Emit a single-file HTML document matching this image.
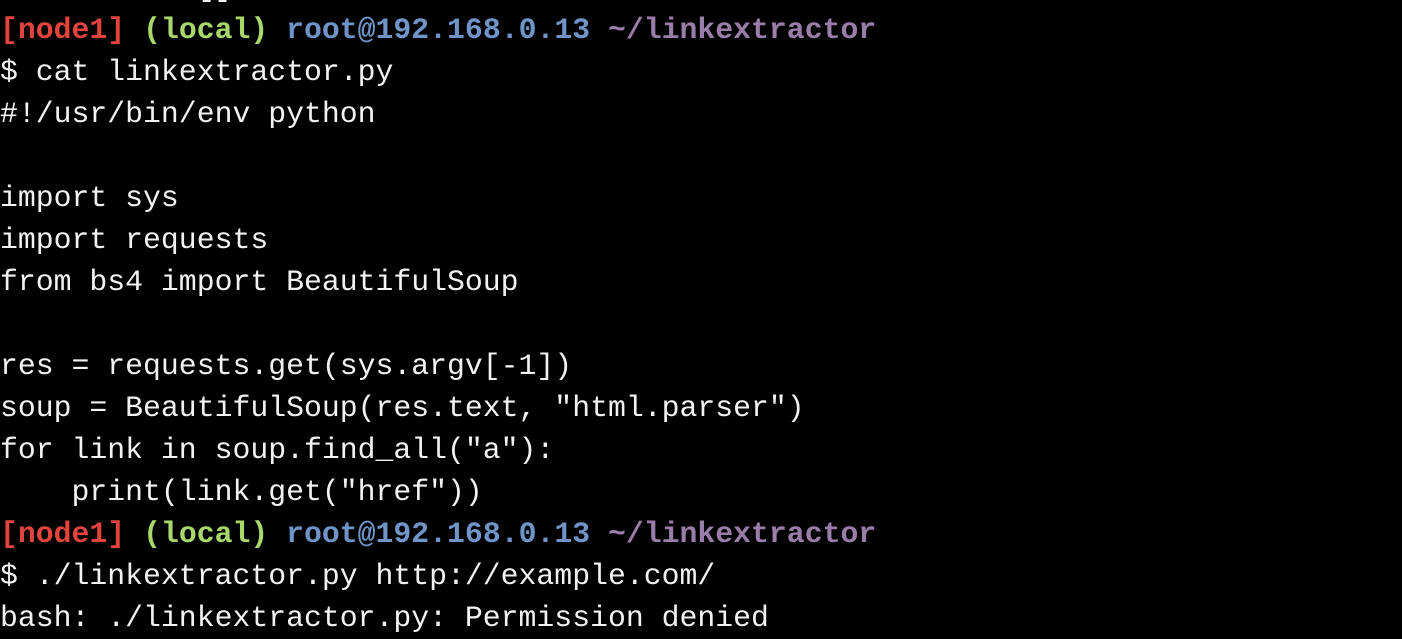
<!DOCTYPE html>
<html><head><meta charset="utf-8"><style>
html,body{margin:0;padding:0;background:#000;width:1402px;height:636px;overflow:hidden}
pre{position:absolute;left:0;top:-33px;margin:0;font-family:"Liberation Mono","Courier New",monospace;font-size:29.8px;line-height:42px;color:#f2f2f2;white-space:pre}
.r{color:#e0443c;font-weight:bold}.g{color:#a8d86c;font-weight:bold}.b{color:#6f95c8;font-weight:bold}.p{color:#9a7eaa;font-weight:bold}
</style></head><body>
<pre>          _[]
<span class="r">[node1]</span> <span class="g">(local)</span> <span class="b">root@192.168.0.13</span> <span class="p">~/linkextractor</span>
$ cat linkextractor.py
#!/usr/bin/env python

import sys
import requests
from bs4 import BeautifulSoup

res = requests.get(sys.argv[-1])
soup = BeautifulSoup(res.text, "html.parser")
for link in soup.find_all("a"):
    print(link.get("href"))
<span class="r">[node1]</span> <span class="g">(local)</span> <span class="b">root@192.168.0.13</span> <span class="p">~/linkextractor</span>
$ ./linkextractor.py http://example.com/
bash: ./linkextractor.py: Permission denied
</pre>
</body></html>
